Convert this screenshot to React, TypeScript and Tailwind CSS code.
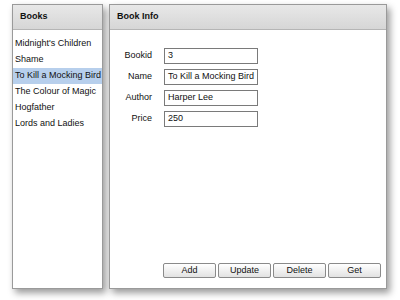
import React from "react";

const books = [
  "Midnight's Children",
  "Shame",
  "To Kill a Mocking Bird",
  "The Colour of Magic",
  "Hogfather",
  "Lords and Ladies",
];

const fields = [
  { label: "Bookid", value: "3" },
  { label: "Name", value: "To Kill a Mocking Bird" },
  { label: "Author", value: "Harper Lee" },
  { label: "Price", value: "250" },
];

function Header({ title }: { title: string }) {
  return (
    <div className="h-[25px] flex items-center pl-[7px] border-b border-[#b5b5b5] bg-gradient-to-b from-[#e8e8e8] to-[#d6d6d6] font-bold text-[9px] text-[#111]">
      {title}
    </div>
  );
}

export default function App() {
  return (
    <div
      className="w-[400px] h-[300px] bg-white flex gap-[6px] pl-[12px] pt-[4px] text-[9px] text-[#111]"
      style={{ fontFamily: '"Liberation Sans", Arial, sans-serif' }}
    >
      <div className="w-[91px] h-[285px] border border-[#9a9a9a] bg-white flex flex-col shadow-[3px_4px_7px_rgba(0,0,0,0.4)]">
        <Header title="Books" />
        <div className="flex flex-col pt-[6px]">
          {books.map((b, i) => (
            <div
              key={b}
              className={
                "h-[16px] flex items-center pl-[2px] whitespace-nowrap " +
                (i === 2 ? "bg-[#b7cfec]" : "")
              }
            >
              {b}
            </div>
          ))}
        </div>
      </div>
      <div className="w-[278px] h-[285px] border border-[#9a9a9a] bg-white flex flex-col shadow-[3px_4px_7px_rgba(0,0,0,0.4)]">
        <Header title="Book Info" />
        <div className="flex-1 flex flex-col pt-[18px] pl-[12px] pr-[5px] pb-[10px]">
          <div className="flex flex-col gap-[5px]">
            {fields.map((f) => (
              <div key={f.label} className="flex items-center">
                <div className="w-[30px] text-right">{f.label}</div>
                <div className="ml-[12px] w-[94px] h-[16px] border border-[#7a7a7a] flex items-center pl-[3px] whitespace-nowrap overflow-hidden">
                  {f.value}
                </div>
              </div>
            ))}
          </div>
          <div className="flex-1" />
          <div className="flex justify-end gap-[2px]">
            {["Add", "Update", "Delete", "Get"].map((b) => (
              <div
                key={b}
                className="w-[53px] h-[15px] border border-[#8a8a8a] rounded-[2px] bg-gradient-to-b from-[#ffffff] to-[#e2e2e2] flex items-center justify-center"
              >
                {b}
              </div>
            ))}
          </div>
        </div>
      </div>
    </div>
  );
}
